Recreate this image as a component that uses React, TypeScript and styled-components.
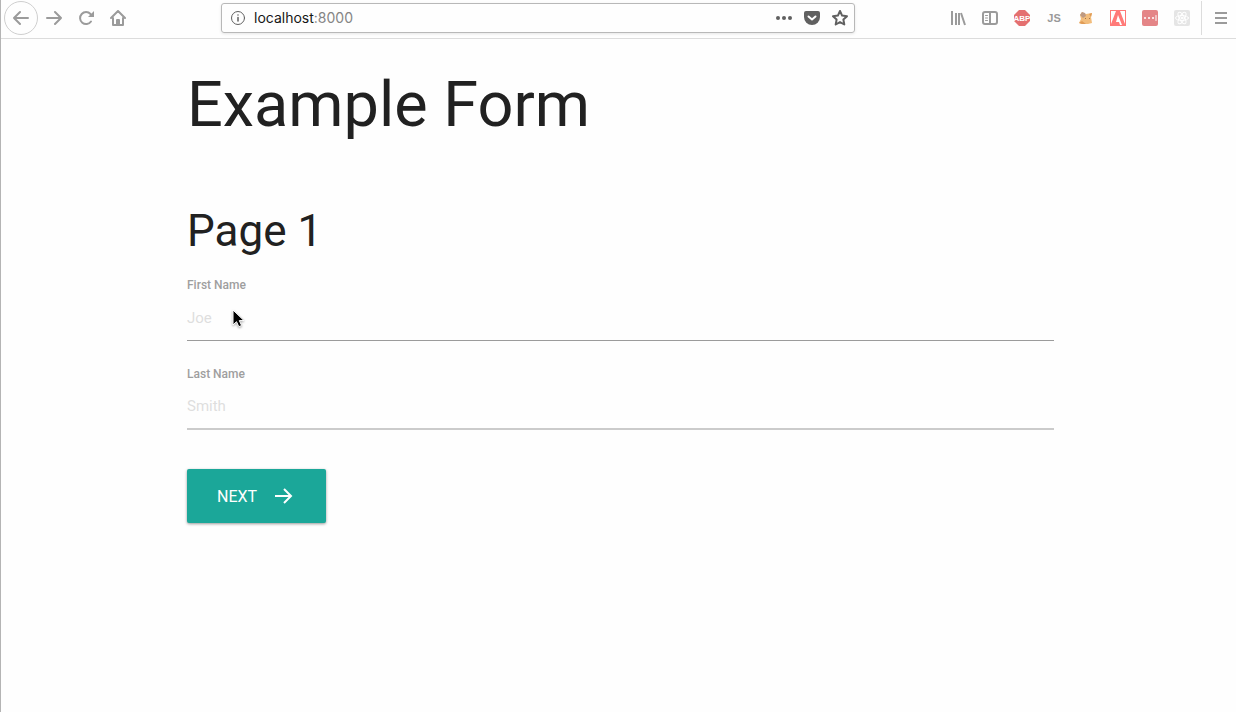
import React from "react";
import styled, { createGlobalStyle } from "styled-components";

const GlobalStyle = createGlobalStyle`
  *, *::before, *::after { box-sizing: border-box; }
  body {
    margin: 0;
    background: #fefefe;
    color: #212121;
    font-family: Roboto, "Liberation Sans", sans-serif;
  }
`;

const Browser = styled.div`
  min-height: 100vh;
  border-left: 1px solid #b4b4b4;
`;

const Toolbar = styled.header`
  display: flex;
  align-items: center;
  height: 39px;
  padding-bottom: 2px;
  border-bottom: 1px solid #dcdcdc;
`;

const Navigation = styled.nav`
  display: flex;
  align-items: center;
  flex: none;
  width: 220px;
  padding-left: 3px;
`;

const IconButton = styled.button<{ $round?: boolean; $size?: number }>`
  display: flex;
  align-items: center;
  justify-content: center;
  flex: none;
  width: ${(p) => p.$size ?? 32}px;
  height: ${(p) => (p.$round ? 34 : 32)}px;
  padding: 0;
  border: ${(p) => (p.$round ? "1px solid #cfcfcf" : "0")};
  border-radius: ${(p) => (p.$round ? "50%" : "2px")};
  background: transparent;
  color: #9b9b9b;
`;

const AddressBar = styled.div`
  display: flex;
  align-items: center;
  flex: 1;
  height: 30px;
  padding: 0 0 0 8px;
  border: 1px solid #b8b8b8;
  border-radius: 3px;
  box-shadow: 0 1px 3px rgba(0, 0, 0, 0.1);
  color: #606060;
`;

const Address = styled.a`
  flex: 1;
  padding-left: 8px;
  font-family: Inter, "Liberation Sans", sans-serif;
  font-size: 14px;
  line-height: 20px;
  color: #161616;
  text-decoration: none;
`;

const Port = styled.span`
  color: #858585;
`;

const PageAction = styled(IconButton)`
  width: 28px;
  height: 28px;
  color: #606060;
`;

const Extensions = styled.div`
  display: flex;
  align-items: center;
  justify-content: flex-end;
  flex: none;
  width: 381px;
`;

const MenuSlot = styled.div`
  display: flex;
  align-items: center;
  justify-content: flex-end;
  width: 35px;
  height: 34px;
  margin-left: 3px;
  border-left: 1px solid #dcdcdc;
`;

const Page = styled.main`
  padding: 31px 182px 40px 186px;
`;

const Title = styled.h1`
  margin: 0;
  font-size: 63px;
  font-weight: 400;
  line-height: 70px;
`;

const Subtitle = styled.h2`
  margin: 67px 0 22px;
  font-size: 44px;
  font-weight: 400;
  line-height: 48px;
`;

const Form = styled.form`
  display: flex;
  flex-direction: column;
  align-items: flex-start;
  gap: 25px;
`;

const Field = styled.div`
  display: flex;
  flex-direction: column;
  width: 100%;
`;

const Label = styled.label`
  font-size: 12px;
  font-weight: 500;
  line-height: 16px;
  color: #9e9e9e;
`;

const TextInput = styled.input<{ $soft?: boolean }>`
  width: 100%;
  height: 46px;
  margin-top: 2px;
  padding: 0;
  border: 0;
  border-bottom: ${(p) => (p.$soft ? "2px solid #cbcbcb" : "1px solid #9b9b9b")};
  outline: 0;
  background: transparent;
  font: 15px Roboto, "Liberation Sans", sans-serif;
  color: #212121;
  &::placeholder {
    color: #dedede;
    opacity: 1;
  }
`;

const NextButton = styled.button`
  display: flex;
  align-items: center;
  gap: 15px;
  height: 54px;
  margin-top: 14px;
  padding: 0 32px 0 30px;
  border: 0;
  border-radius: 2px;
  background: #1ba799;
  box-shadow: 0 1px 3px rgba(0, 0, 0, 0.4);
  color: #fff;
  font: 16px Roboto, "Liberation Sans", sans-serif;
`;

const Pointer = styled.svg`
  position: absolute;
  left: 231px;
  top: 309px;
  pointer-events: none;
  filter: drop-shadow(0 1px 1px rgba(0, 0, 0, 0.35));
`;

const iconProps = { fill: "none", stroke: "currentColor", strokeWidth: 2, strokeLinecap: "round", strokeLinejoin: "round" } as const;

const Icon = ({ children, size = 16 }: { children: React.ReactNode; size?: number }) => (
  <svg width={size} height={size} viewBox={`0 0 ${size} ${size}`} aria-hidden="true" {...iconProps}>
    {children}
  </svg>
);

const extensions = [
  {
    name: "Library",
    icon: (
      <g strokeLinecap="butt">
        <path d="M2 1v14M6 3v12M9 3v12M11 3l4 12" />
      </g>
    ),
  },
  {
    name: "Sidebars",
    icon: (
      <>
        <rect x="1" y="2" width="14" height="12" rx="2" />
        <path d="M8 2v12" />
        <path d="M3.5 5.5h2M3.5 8h2M3.5 10.5h2" strokeWidth="1" />
      </>
    ),
  },
  {
    name: "Adblock Plus",
    icon: (
      <>
        <path d="M5 0h6l5 5v6l-5 5H5l-5-5V5z" fill="#e47070" stroke="none" />
        <text x="8" y="11" textAnchor="middle" fontSize="8" fontWeight="700" fill="#fff" stroke="none">ABP</text>
      </>
    ),
  },
  {
    name: "JavaScript toggle",
    icon: <text x="8" y="12" textAnchor="middle" fontSize="11" fontWeight="700" fill="#999" stroke="none">JS</text>,
  },
  {
    name: "Fox",
    icon: (
      <g stroke="none">
        <path d="M2 5l2-3 4 2 6-1-1 4 1 6-4 1H4l-3-1 2-4z" fill="#f2bd7c" />
        <path d="M2 5l2-3 3 1 1 3-3 2z" fill="#bd9a83" />
        <path d="M11 4l3-1-1 4zM1 13l3-2 4 3H4z" fill="#e09b55" />
        <path d="M7 8h1v1H7zM11 8h1v1h-1z" fill="#a3744c" />
      </g>
    ),
  },
  {
    name: "Adobe",
    icon: (
      <g stroke="none">
        <path d="M0 0h16v16H0z" fill="#ff7a78" />
        <path d="M1 1h5L1 14zM10 1h5v13zM8 5l4 10h-2l-1-3H6z" fill="#fff" />
      </g>
    ),
  },
  {
    name: "LastPass",
    icon: (
      <>
        <rect width="16" height="16" rx="2" fill="#e48587" stroke="none" />
        <path d="M3 8h.01M7 8h.01M11 8h.01" />
        <path d="M14 5.500v5" strokeWidth="1" />
      </>
    ),
  },
  {
    name: "React",
    icon: (
      <>
        <rect width="16" height="16" rx="2" fill="#e5e5e5" stroke="none" />
        <g strokeWidth="1" stroke="#fff">
          <ellipse cx="8" cy="8" rx="6.500" ry="2.500" />
          <ellipse cx="8" cy="8" rx="6.500" ry="2.500" transform="rotate(60 8 8)" />
          <ellipse cx="8" cy="8" rx="6.500" ry="2.500" transform="rotate(120 8 8)" />
          <circle cx="8" cy="8" r="1" fill="#fff" />
        </g>
      </>
    ),
  },
];

const Extension = styled(IconButton)`
  svg { color: ${(p) => (p["aria-label"] === "LastPass" ? "#fff" : "#9b9b9b")}; }
`;

function BrowserToolbar() {
  return (
    <Toolbar>
      <Navigation aria-label="Browser">
        <IconButton $round $size={34} aria-label="Back">
          <Icon><path d="M15 8H1M7 2L1 8l6 6" /></Icon>
        </IconButton>
        <IconButton aria-label="Forward">
          <Icon><path d="M1 8h14M9 2l6 6-6 6" /></Icon>
        </IconButton>
        <IconButton aria-label="Reload">
          <Icon>
            <path d="M13 11.500A6 6 0 1 1 12.500 4" />
            <path d="M16 1v6h-6z" fill="currentColor" stroke="none" />
          </Icon>
        </IconButton>
        <IconButton aria-label="Home">
          <Icon>
            <path d="M1 8l7-7 7 7M3 8v7h10V8" />
            <path d="M7 15v-5h2v5" />
          </Icon>
        </IconButton>
      </Navigation>
      <AddressBar>
        <Icon>
          <circle cx="8" cy="8" r="6.500" strokeWidth="1" />
          <path d="M8 7.500v3.500M8 5h.01" strokeWidth="1.500" />
        </Icon>
        <Address href="#">localhost<Port>:8000</Port></Address>
        <PageAction aria-label="Page actions">
          <Icon>
            <g fill="currentColor" stroke="none">
              <circle cx="2" cy="8" r="2" /><circle cx="8" cy="8" r="2" /><circle cx="14" cy="8" r="2" />
            </g>
          </Icon>
        </PageAction>
        <PageAction aria-label="Save to Pocket">
          <Icon>
            <path d="M2 1h12a2 2 0 0 1 2 2v4a8 8 0 0 1-16 0V3a2 2 0 0 1 2-2z" fill="currentColor" stroke="none" />
            <path d="M4.500 6.500L8 9.500l3.500-3" stroke="#fff" />
          </Icon>
        </PageAction>
        <PageAction aria-label="Bookmark">
          <Icon>
            <path d="M8 1l2.100 4.600 4.900.6-3.600 3.400.9 4.900L8 12.100l-4.300 2.400.9-4.900L1 6.200l4.900-.6z" />
          </Icon>
        </PageAction>
      </AddressBar>
      <Extensions>
        {extensions.map((item) => (
          <Extension key={item.name} aria-label={item.name}><Icon>{item.icon}</Icon></Extension>
        ))}
        <MenuSlot>
          <IconButton $size={30} aria-label="Menu">
            <Icon><path d="M2 3h12M2 8h12M2 13h12" strokeLinecap="butt" /></Icon>
          </IconButton>
        </MenuSlot>
      </Extensions>
    </Toolbar>
  );
}

export default function App() {
  return (
    <>
      <GlobalStyle />
      <Browser>
        <BrowserToolbar />
        <Page>
          <Title>Example Form</Title>
          <Subtitle>Page 1</Subtitle>
          <Form onSubmit={(event) => event.preventDefault()}>
            <Field>
              <Label htmlFor="first-name">First Name</Label>
              <TextInput id="first-name" placeholder="Joe" />
            </Field>
            <Field>
              <Label htmlFor="last-name">Last Name</Label>
              <TextInput id="last-name" placeholder="Smith" $soft />
            </Field>
            <NextButton type="submit">
              NEXT
              <Icon size={22}><path d="M3 11h16M12 4l7 7-7 7" strokeLinecap="butt" strokeLinejoin="miter" /></Icon>
            </NextButton>
          </Form>
        </Page>
      </Browser>
      <Pointer width="14" height="20" viewBox="0 0 14 20" aria-hidden="true">
        <path d="M2 1v15l3.500-3.300 2.300 5 2.800-1.200-2.300-4.900H13z" fill="#000" stroke="#fff" />
      </Pointer>
    </>
  );
}
